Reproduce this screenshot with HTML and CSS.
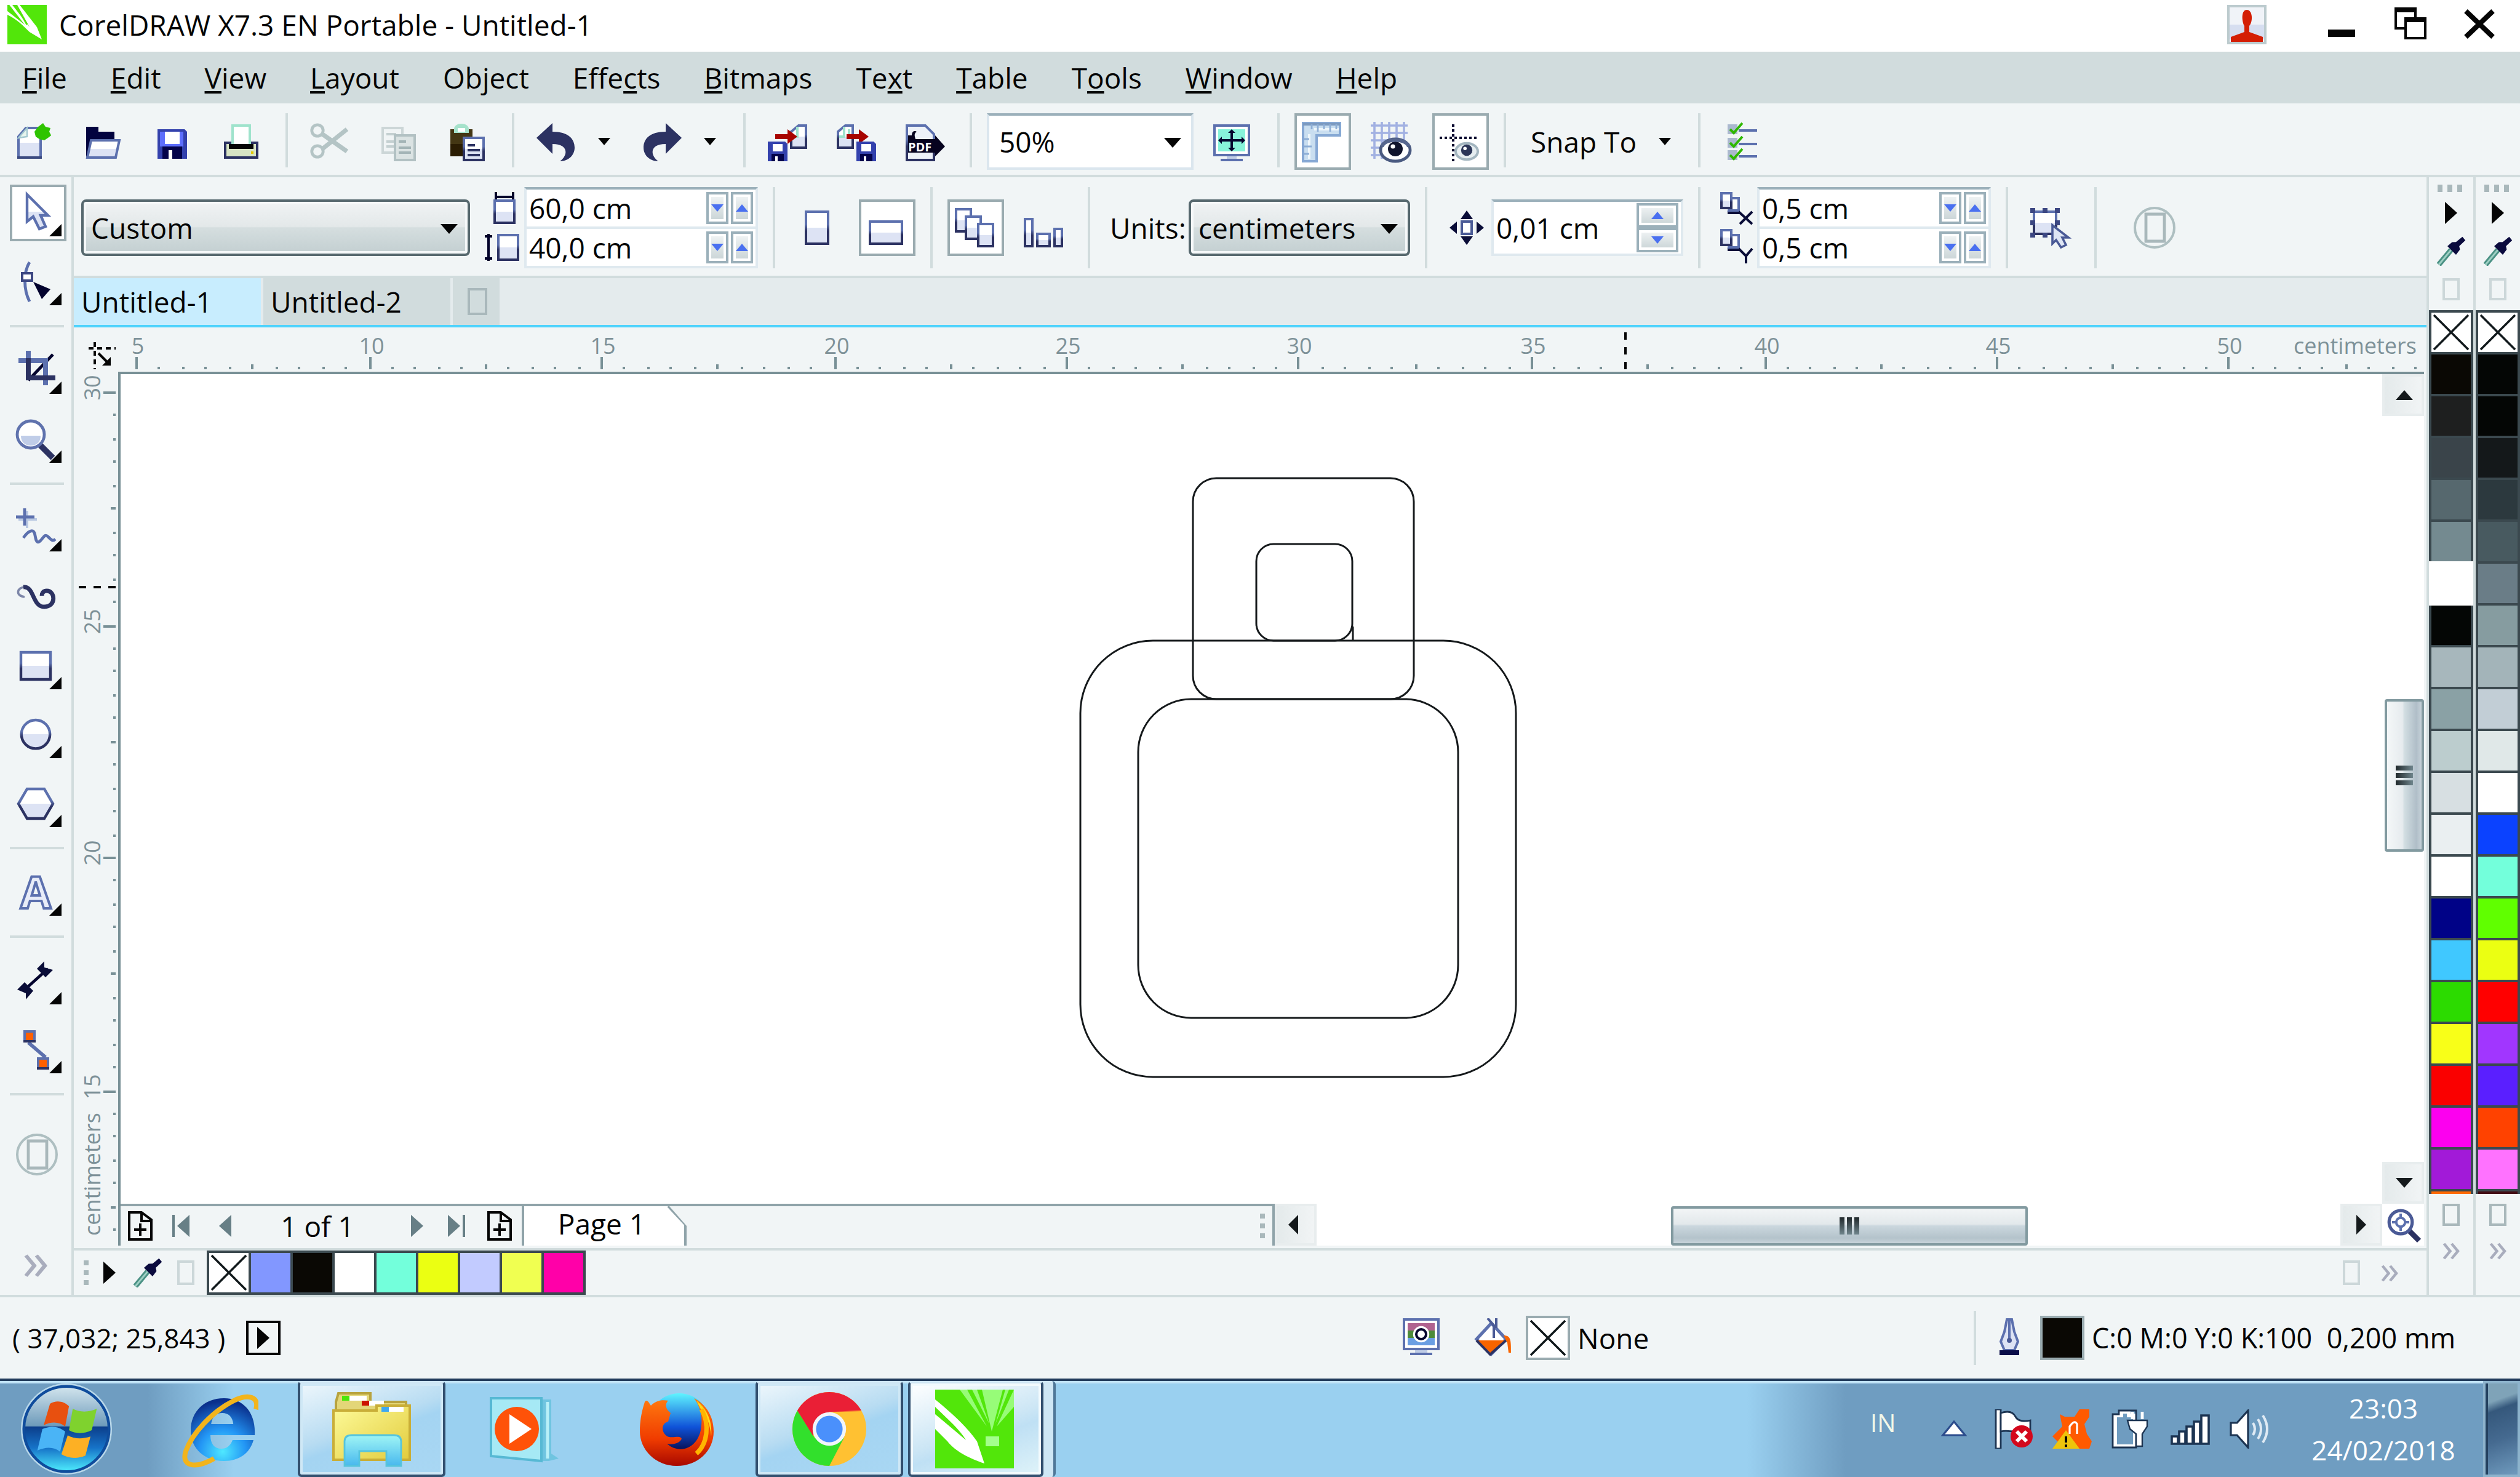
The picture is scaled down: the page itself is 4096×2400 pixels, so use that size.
FILE: index.html
```html
<!DOCTYPE html>
<html lang="en">
<head>
<meta charset="utf-8">
<title>CorelDRAW X7.3 EN Portable - Untitled-1</title>
<link rel="stylesheet" href="styles.css">
</head>
<body>
<svg class="defs" aria-hidden="true">
  <defs>
    <linearGradient id="edge" x1="0" y1="0" x2="0" y2="1"><stop offset=".4" stop-color="#5c70ae"/><stop offset=".6" stop-color="#2c3262"/></linearGradient>
    <linearGradient id="half" x1="0" y1="0" x2="0" y2="1"><stop offset=".5" stop-color="#fff"/><stop offset=".5" stop-color="#dde3f4"/></linearGradient>
    <linearGradient id="orb" x1="0" y1="0" x2="0" y2="1"><stop offset="0" stop-color="#d4e6ee"/><stop offset=".46" stop-color="#6e9bbb"/><stop offset=".48" stop-color="#0c3f8c"/><stop offset=".72" stop-color="#1673c8"/><stop offset="1" stop-color="#4ff0ff"/></linearGradient>
    <radialGradient id="ie" cx=".5" cy=".85" r=".8"><stop offset="0" stop-color="#4fe8ff"/><stop offset=".45" stop-color="#2396f5"/><stop offset="1" stop-color="#0a2f8c"/></radialGradient>
    <linearGradient id="folder" x1="0" y1="0" x2="1" y2="1"><stop offset="0" stop-color="#fdfb9a"/><stop offset="1" stop-color="#e2cb3c"/></linearGradient>
    <linearGradient id="glass" x1="0" y1="0" x2="0" y2="1"><stop offset="0" stop-color="#9ff5f5"/><stop offset="1" stop-color="#48b8ee"/></linearGradient>
    <linearGradient id="fox" x1="0" y1="0" x2="0" y2="1"><stop offset="0" stop-color="#ff7a10"/><stop offset=".6" stop-color="#f03c00"/><stop offset="1" stop-color="#a80800"/></linearGradient>
    <linearGradient id="globe" x1="0" y1="0" x2="0" y2="1"><stop offset="0" stop-color="#5ff4ff"/><stop offset=".55" stop-color="#0f52d8"/><stop offset="1" stop-color="#06033c"/></linearGradient>
    <symbol id="i-dropper" viewBox="0 0 12 12"><path d="M1 11.500 6 5.500" stroke="#4a9184" stroke-width="2.200"/><path d="M1 11.500 6 5.500" stroke="#9fd0c4" stroke-width=".7"/><path d="M4.500 4 8 7.500 9.600 5.400 9.300 4 11.800 1.600 10.600.2 8 2.300 6.400 2.400Z" fill="#0b0b3e"/></symbol>
    <symbol id="i-play" viewBox="0 0 5 9"><path d="M0 0 5 4.500 0 9Z" fill="#050505"/></symbol>
    <symbol id="i-none" viewBox="0 0 16 16"><path d="M1 1 15 15M15 1 1 15" stroke="#11191c" stroke-width=".9"/></symbol>
    <symbol id="i-oval" viewBox="0 0 18 18"><circle cx="9" cy="9" r="8" fill="none" stroke="#aebfc1"/><path d="M5.500 3.500v11h7.500v-11Z" fill="none" stroke="#a9b8bb" stroke-width="1.200"/></symbol>
    <symbol id="i-addpage" viewBox="0 0 10 12"><path d="M.5.500h5L9.500 3.500v8h-9ZM5.500 1v3h4M5 5v5M2.500 7.500h5" fill="none" stroke="#050505"/></symbol>
  </defs>
</svg>

<header class="titlebar">
  <svg class="app-icon" viewBox="0 0 16 16"><rect width="16" height="16" fill="#52e60a"/><path d="M0 4C4 6 6 8 9 11L14 14 12 9 5 0H4L9 9 2 0H.8L7 8 0 2.500Z" fill="#fff"/><path d="M4 1 8 8" stroke="#52e60a" stroke-width=".7"/></svg>
  <h1 class="title">CorelDRAW X7.3 EN Portable - Untitled-1</h1>
  <div class="window-controls">
    <button class="wc" aria-label="Account"><svg viewBox="0 0 16 16"><rect x=".5" y=".5" width="15" height="15" fill="#f0f3f8" stroke="#bccbce"/><rect x="1" y="8" width="14" height="6" fill="#d6def0"/><path d="M8 2C5.500 2 6 7 7 8.500V11L1.500 13V15h13V13L9 11V8.500C10.500 7 10.500 2 8 2Z" fill="#d41e04"/></svg></button>
    <button class="wc" aria-label="Minimize"><svg viewBox="0 0 16 16"><path d="M2 10h11v3H2Z" fill="#050505"/></svg></button>
    <button class="wc" aria-label="Restore"><svg viewBox="0 0 16 16"><path d="M1.500 2h8v7.500h-8Z" fill="#fff" stroke="#050505"/><path d="M1 1h9v2H1Z" fill="#050505"/><path d="M5.500 6h8v7.500h-8Z" fill="#fff" stroke="#050505"/><path d="M5 5h9v2H5Z" fill="#050505"/></svg></button>
    <button class="wc" aria-label="Close"><svg viewBox="0 0 16 16"><path d="M2 2.500 13 13M13 2.500 2 13" stroke="#050505" stroke-width="2"/></svg></button>
  </div>
</header>

<nav class="menubar" aria-label="Main menu">
  <a href="#"><u>F</u>ile</a><a href="#"><u>E</u>dit</a><a href="#"><u>V</u>iew</a><a href="#"><u>L</u>ayout</a><a href="#">Ob<u>j</u>ect</a><a href="#">Effe<u>c</u>ts</a><a href="#"><u>B</u>itmaps</a><a href="#">Te<u>x</u>t</a><a href="#"><u>T</u>able</a><a href="#">T<u>o</u>ols</a><a href="#"><u>W</u>indow</a><a href="#"><u>H</u>elp</a>
</nav>

<div class="toolbar" role="toolbar" aria-label="Standard">
  <button class="tool" aria-label="New"><svg viewBox="0 0 16 16"><path d="M1.500 14.500V6L4.500 2.500H10.500V14.500Z" fill="url(#half)" stroke="#5c70ae"/><path d="M1 14h10v1H1Z" fill="#3b4a80"/><path d="M1.500 6.500 5 6V2.500Z" fill="#e8f5ee" stroke="#a3c8d0" stroke-width=".6"/><path d="M11.500.5 12.500 2 14.500 2.500 14 4 14.800 5.500 13.500 6.500 12 7.500 10 7 8.500 6 8 4 9.500 2Z" fill="#2fc400"/></svg></button>
  <button class="tool" aria-label="Open"><svg viewBox="0 0 16 16"><path d="M1 14V2h5v2h6.500v4H4L2 15Z" fill="#02033f"/><path d="M3 7.500H14.500L13 14.500H1.500Z" fill="url(#half)" stroke="#5c70ae"/></svg></button>
  <button class="tool" aria-label="Save"><svg viewBox="0 0 16 16"><path d="M2 3h11l1 1v11H2Z" fill="#3341ad"/><path d="M3 4h2v5h6V4h1.500v6H3Z" fill="#5d6efc"/><path d="M5 4h6v5H5Z" fill="#fff"/><path d="M4 10h8v5H4Z" fill="#03034a"/><path d="M6.500 11.500h1.500V15H6.500Z" fill="#fff"/></svg></button>
  <button class="tool" aria-label="Print"><svg viewBox="0 0 16 16"><path d="M1.500 8.500H14.500V14.500H1.500Z" fill="#d8e4c4" stroke="#2c3262"/><path d="M4.500 1.500h7v8h-7Z" fill="#fff" stroke="#9fe3cc"/><path d="M3 9h10v2H3Z" fill="#050505"/><path d="M12 12h1v1h-1Z" fill="#e4c800"/></svg></button>
  <span class="sep"></span>
  <button class="tool" aria-label="Cut" disabled><svg viewBox="0 0 16 16" fill="none" stroke="#b4c4c5"><circle cx="3" cy="3.500" r="2.300" stroke-width="1.200"/><circle cx="3" cy="12" r="2.300" stroke-width="1.200"/><path d="M5 5 15 12M5 11 15 3" stroke-width="1.800"/></svg></button>
  <button class="tool" aria-label="Copy" disabled><svg viewBox="0 0 16 16"><path d="M1.500 2.500h8v10h-8Z" fill="#f0f4f5" stroke="#ccd6d7"/><path d="M3 5h4M3 8h3M3 10h3" stroke="#c4d0d1"/><path d="M6.500 5.500h8v10h-8Z" fill="#dbe3e3" stroke="#b2c1c3"/><path d="M8 8h3M8 10.500h5M8 12.500h5" stroke="#a3b4b6"/></svg></button>
  <button class="tool" aria-label="Paste"><svg viewBox="0 0 16 16"><path d="M1 3h9v11H1Z" fill="#443714"/><path d="M1 9h9v5H1Z" fill="#2b1d03"/><path d="M2.500 4.500V3C2.500 0 8.500 0 8.500 3V4.500Z" fill="#a6e2cb"/><path d="M4 2.500h3v1.500H4Z" fill="#fff"/><path d="M6.500 6.500h8v9h-8Z" fill="url(#half)" stroke="url(#edge)"/><path d="M8 9.500h3M8 11.500h5M8 13.500h5" stroke="#2c3262"/></svg></button>
  <span class="sep"></span>
  <div class="split"><button class="tool" aria-label="Undo"><svg viewBox="0 0 16 16"><path d="M6.500.5V4C13 4 15.500 7 15.500 10.500 15.500 13.500 13 16 9.500 16 13 13.500 13 9 6.500 9V13L0 6.500Z" fill="#2c3262"/></svg></button><button class="drop" aria-label="Undo list"></button></div>
  <div class="split"><button class="tool" aria-label="Redo"><svg viewBox="0 0 16 16"><path d="M9.500.5V4C3 4 .5 7 .5 10.500.5 13.500 3 16 6.500 16 3 13.500 3 9 9.500 9V13L16 6.500Z" fill="#2c3262"/></svg></button><button class="drop" aria-label="Redo list"></button></div>
  <span class="sep"></span>
  <button class="tool" aria-label="Import"><svg viewBox="0 0 16 16"><path d="M9.500 10.500V4L12.500 1.500h3v9Z" fill="url(#half)" stroke="url(#edge)"/><path d="M12 2v4H9.500" fill="none" stroke="#9fe3cc"/><path d="M3 5h5V3l4 3-4 3V7H3Z" fill="#a80400"/><path d="M0 8h7l1 1v7H0Z" fill="#3341ad"/><path d="M2 9h4v3H2Z" fill="#fff"/><path d="M1.500 13h5v3h-5Z" fill="#03034a"/><path d="M3 14h1v2H3Z" fill="#fff"/></svg></button>
  <button class="tool" aria-label="Export"><svg viewBox="0 0 16 16"><path d="M.5 10.500V4L3.500 1.500h3v9Z" fill="url(#half)" stroke="url(#edge)"/><path d="M3 2v4H1M5 3v4" fill="none" stroke="#9fe3cc"/><path d="M4 5h5V3l4 3-4 3V7H4Z" fill="#a80400"/><path d="M8 8h7l1 1v7H8Z" fill="#3341ad"/><path d="M10 9h4v3h-4Z" fill="#fff"/><path d="M9.500 13h5v3h-5Z" fill="#03034a"/><path d="M11 14h1v2h-1Z" fill="#fff"/></svg></button>
  <button class="tool" aria-label="Publish to PDF"><svg viewBox="0 0 16 16"><path d="M.5 1.500H8L11.500 5V15.500H.5Z" fill="#edf1f8" stroke="url(#edge)"/><path d="M1 7V5.500h1.500C2.500 3.500 4 3.500 4.500 4 3 5 4 6.500 4 7h8V5.500L16 10 12 14V12.500H1Z" fill="#06031f"/><text class="pdf" x="1" y="12">PDF</text></svg></button>
  <span class="sep"></span>
  <div class="zoom-level"><select aria-label="Zoom level"><option>50%</option></select></div>
  <button class="tool" aria-label="Full-screen preview"><svg viewBox="0 0 16 16"><path d="M.5 1.500h14v12H.5Z" fill="#fff" stroke="#5c70ae"/><path d="M2 3h11v9H2Z" fill="#87f3da"/><path d="M7.500 3.500v8M2.500 7.500h10" stroke="#04042e"/><path d="M6 4.500h3L7.500 3ZM6 10.500h3L7.500 12ZM3.500 6v3L2 7.500ZM11.500 6v3L13 7.500Z" fill="#04042e"/><path d="M5.500 14h4v1h-4Z" fill="#c0cde6"/><path d="M3 15h9v1H3Z" fill="#5c70ae"/></svg></button>
  <span class="sep"></span>
  <button class="tool on" aria-label="Show rulers"><svg viewBox="0 0 16 16"><path d="M.5.500h15v5H6v10.500H.5Z" fill="#c9def0" stroke="#86a8d4"/><path d="M.5.500h15v1H.5Z" fill="#7c9ac0"/><path d="M5 3h10M3 5v10" stroke="#eef6fb"/><path d="M4 1v2M6.500 1v3M9 1v2M11.500 1v3M14 1v2M1 7h2M1 10h3M1 13h2" stroke="#8eaed6" stroke-width=".7"/></svg></button>
  <button class="tool" aria-label="Show grid"><svg viewBox="0 0 16 16"><path d="M1.500 0v15M4.500 0v15M7.500 0v8M10.500 0v8M13.500 0v8M0 1.500h15M0 4.500h15M0 7.500h7M0 10.500h5M0 13.500h4" stroke="#a2b1e2" stroke-width=".9"/><ellipse cx="10" cy="11.500" rx="6" ry="4.500" fill="#fff" stroke="#4a5a80" stroke-width="1.200"/><circle cx="10" cy="11" r="3" fill="#10142c"/><circle cx="9" cy="10" r=".9" fill="#fff"/><path d="M4.500 10C6 6.500 14 6.500 15.500 10" fill="none" stroke="#56668e" stroke-width="1.500"/></svg></button>
  <button class="tool on" aria-label="Show guidelines"><svg viewBox="0 0 16 16"><path d="M5.500 1v16M0 6.500h16" stroke="#04042e" stroke-dasharray="1 1"/><ellipse cx="11" cy="12" rx="4.500" ry="3.300" fill="#e6edf0" stroke="#a4b6c0"/><circle cx="11" cy="11.500" r="2.300" fill="#2c3658"/><circle cx="10.300" cy="10.800" r=".7" fill="#fff"/></svg></button>
  <span class="sep"></span>
  <button class="snap">Snap To</button>
  <span class="sep"></span>
  <button class="tool" aria-label="Options"><svg viewBox="0 0 16 16"><path d="M2 1h4v4H2ZM2 6.500h4v4H2ZM2 11.500h4v4H2Z" fill="#aab8ce"/><path d="M6.500 3.500H14M6.500 9H14M6.500 14H14" stroke="#5c70ae"/><path d="M3 3 4.500 4.500 8 .5M3 8.500 4.500 10 8 6M3 13.500 4.500 15 8 11" fill="none" stroke="#2fb800"/></svg></button>
</div>

<main class="workspace">
  <aside class="toolbox" aria-label="Toolbox">
    <button class="tool fly on" aria-label="Pick"><svg viewBox="0 0 16 16"><path d="M4.500.500V11.500L7 9.500 9.500 14.500 12 13.500 10 9H13Z" fill="url(#half)" stroke="#5c70ae" stroke-width="1.100"/></svg></button>
    <button class="tool fly" aria-label="Shape"><svg viewBox="0 0 16 16"><path d="M5.500 0C3 4 3 11 5.500 16" fill="none" stroke="#5c70ae" stroke-width="1.200"/><path d="M2.500 4.500h4v3h-4Z" fill="#fff" stroke="#3c4782"/><path d="M7 8 14 11 10.500 15Z" fill="#03032e"/></svg></button>
    <span class="rule"></span>
    <button class="tool fly" aria-label="Crop"><svg viewBox="0 0 16 16"><path d="M5 12 15 1.500" stroke="#04042e" stroke-width="1.200"/><path d="M1 4h11v10" fill="none" stroke="#5c70ae" stroke-width="2"/><path d="M5 1v10h11" fill="none" stroke="#2c3262" stroke-width="2"/><path d="M4 0h2v3H4Z" fill="#5c70ae"/></svg></button>
    <button class="tool fly" aria-label="Zoom"><svg viewBox="0 0 16 16"><path d="M9.500 10 15 15.500" stroke="#2c3262" stroke-width="2.400"/><circle cx="6" cy="6" r="5.500" fill="#fff" stroke="#5f72ad" stroke-width="1.200"/><path d="M2 6.500h8C10 9 8.500 10.500 6 10.500S2 9 2 6.500Z" fill="#c0cde8"/></svg></button>
    <span class="rule"></span>
    <button class="tool fly" aria-label="Freehand"><svg viewBox="0 0 16 16"><path d="M4.500 1v7M1 4.500h7.500" stroke="#b9c8e2"/><path d="M3.500 0v7M0 3.500h7.500" stroke="#5c70ae" stroke-width="1.200"/><path d="M3 12C5 9 7 8.500 7.500 10S8 14.500 9.500 13.500 11.500 10 13 11.500 15 13.500 16 12.500" fill="none" stroke="#5c70ae" stroke-width="1.200"/></svg></button>
    <button class="tool" aria-label="Artistic media"><svg viewBox="0 0 16 16"><path d="M3.500 8C-.5 7.500.5 4 3.500 4" fill="none" stroke="#7d86a8" stroke-width=".9"/><path d="M3 4C7.500 3.500 6.500 12 11.500 12 16.500 12 16 5.500 12.500 5.500 11 5.500 10.500 6.500 10.500 7.500" fill="none" stroke="#2c3262" stroke-width="1.700"/></svg></button>
    <button class="tool fly" aria-label="Rectangle"><svg viewBox="0 0 16 16"><path d="M2 2.500h12v11H2Z" fill="url(#half)" stroke="url(#edge)" stroke-width="1.100"/></svg></button>
    <button class="tool fly" aria-label="Ellipse"><svg viewBox="0 0 16 16"><circle cx="8" cy="7.800" r="5.800" fill="url(#half)" stroke="url(#edge)" stroke-width="1.100"/></svg></button>
    <button class="tool fly" aria-label="Polygon"><svg viewBox="0 0 16 16"><path d="M4.500 2h7L15 8 11.500 14h-7L1 8Z" fill="url(#half)" stroke="url(#edge)" stroke-width="1.100"/></svg></button>
    <span class="rule"></span>
    <button class="tool fly" aria-label="Text"><svg viewBox="0 0 16 16"><text class="a-icon" x="8" y="14.500">A</text></svg></button>
    <span class="rule"></span>
    <button class="tool fly" aria-label="Dimension"><svg viewBox="0 0 16 16"><path d="M3 12 13 3" stroke="#03032e" stroke-width="1.200"/><path d="M.5 11.500 3.500 8.500 7 12 4 15.500V13ZM15 3.500 12 6.500 8.500 3 11.500 0V2.500Z" fill="#0a0d38"/></svg></button>
    <button class="tool fly" aria-label="Connector"><svg viewBox="0 0 16 16"><path d="M5 5 12 11" stroke="#5c70ae" stroke-width="1.400"/><path d="M3 0h5v5H3ZM8.500 11h5v5h-5Z" fill="#5c70ae"/><path d="M4 1h3v3H4ZM9.500 12h3v3h-3Z" fill="#ff5f00"/><path d="M3 4h5v1H3ZM8.500 15h5v1h-5Z" fill="#2c3262"/></svg></button>
    <span class="rule"></span>
    <button class="oval" aria-label="Quick customize"><svg viewBox="0 0 18 18"><use href="#i-oval"/></svg></button>
    <button class="more" aria-label="More tools">»</button>
  </aside>

  <section class="center">
    <div class="propbar" role="toolbar" aria-label="Property bar">
      <div class="pick page-size"><select aria-label="Page size"><option>Custom</option></select></div>
      <div class="pair dims">
        <label for="pw"><svg viewBox="0 0 16 16"><path d="M4.500 0v4M11.500 0v4M4 2h8" stroke="#02022a"/><path d="M4 3.500h8v9H4Z" fill="url(#half)" stroke="url(#edge)"/></svg></label>
        <div class="field"><input id="pw" value="60,0 cm"><button class="spin down" aria-label="Decrease width"></button><button class="spin up" aria-label="Increase width"></button></div>
        <label for="ph"><svg viewBox="0 0 16 16"><path d="M1.500 1v11M0 2h3M0 11h3" stroke="#02022a"/><path d="M5.500 1.500h8v10h-8Z" fill="url(#half)" stroke="url(#edge)"/></svg></label>
        <div class="field"><input id="ph" value="40,0 cm"><button class="spin down" aria-label="Decrease height"></button><button class="spin up" aria-label="Increase height"></button></div>
      </div>
      <span class="sep"></span>
      <button class="tool" aria-label="Portrait"><svg viewBox="0 0 16 16"><path d="M3.500 1.500h9v13h-9Z" fill="url(#half)" stroke="url(#edge)"/></svg></button>
      <button class="tool on" aria-label="Landscape"><svg viewBox="0 0 16 16"><path d="M1.500 5.500h13v9h-13Z" fill="url(#half)" stroke="url(#edge)"/></svg></button>
      <span class="sep"></span>
      <button class="tool on" aria-label="All pages"><svg viewBox="0 0 16 16" fill="url(#half)" stroke="url(#edge)"><path d="M.5.500h6v9h-6Z"/><path d="M4.500 3.500h6v9h-6Z"/><path d="M9.500 6.500h6v9h-6Z"/></svg></button>
      <button class="tool" aria-label="Current page"><svg viewBox="0 0 16 16" fill="url(#half)" stroke="url(#edge)"><path d="M.5 4.500h3v11h-3Z"/><path d="M5.500 10.500h5v5h-5Z"/><path d="M12.500 8.500h3v7h-3Z"/></svg></button>
      <span class="sep"></span>
      <div class="units"><label for="units">Units:</label><div class="pick"><select id="units"><option>centimeters</option></select></div></div>
      <span class="sep"></span>
      <div class="nudge">
        <label for="nudge"><svg viewBox="0 0 16 16"><path d="M8 1 10.500 4.500h-5ZM8 15l2.500-3.500h-5ZM1 8l3-2.500v5ZM15 8l-3-2.500v5Z" fill="#0a0d38"/><path d="M6 5.500h4v5H6Z" fill="#fff" stroke="#4a5a96"/></svg></label>
        <div class="field"><input id="nudge" value="0,01 cm"><div class="stack"><button class="spin up" aria-label="Increase nudge"></button><button class="spin down" aria-label="Decrease nudge"></button></div></div>
      </div>
      <span class="sep"></span>
      <div class="pair">
        <label for="dx"><svg viewBox="0 0 16 16"><path d="M6.500 4.500h3v5h-4Z" fill="#fff" stroke="#5c70ae"/><path d="M2.500 2.500h4v6h-4Z" fill="url(#half)" stroke="url(#edge)"/><path d="M5 10.500h5M9.500 10 15 15M15 10 10 15" stroke="#0a0d38" fill="none"/></svg></label>
        <div class="field"><input id="dx" value="0,5 cm"><button class="spin down" aria-label="Decrease x"></button><button class="spin up" aria-label="Increase x"></button></div>
        <label for="dy"><svg viewBox="0 0 16 16"><path d="M6.500 3.500h3v5h-4Z" fill="#fff" stroke="#5c70ae"/><path d="M2.500 1.500h4v6h-4Z" fill="url(#half)" stroke="url(#edge)"/><path d="M5 9.500h5M9.500 9 12.500 12 15 9M12.500 12v3" stroke="#0a0d38" fill="none"/></svg></label>
        <div class="field"><input id="dy" value="0,5 cm"><button class="spin down" aria-label="Decrease y"></button><button class="spin up" aria-label="Increase y"></button></div>
      </div>
      <span class="sep"></span>
      <button class="tool" aria-label="Treat as filled"><svg viewBox="0 0 16 16"><path d="M1.500 1.500h9v9h-9Z" fill="url(#half)" stroke="url(#edge)"/><path d="M0 0h2v2H0ZM5 0h2v2H5ZM10 0h2v2h-2ZM0 5h2v2H0ZM10 5h2v2h-2ZM0 10h2v2H0ZM5 10h2v2H5Z" fill="#3c4782"/><path d="M9 7v7.500l1.500-1.500L12.500 16l2-1-1.500-3h2.500Z" fill="#dfe6f4" stroke="#4a5a96" stroke-width=".9"/></svg></button>
      <span class="sep"></span>
      <button class="oval" aria-label="Quick customize"><svg viewBox="0 0 18 18"><use href="#i-oval"/></svg></button>
    </div>

    <div class="tabs">
      <button class="tab active">Untitled-1</button><button class="tab">Untitled-2</button><button class="tab add" aria-label="New document"><span class="box"></span></button>
    </div>

    <div class="editor">
      <div class="corner"><svg viewBox="0 0 12 12"><path d="M2.500 0v11M0 2.500h11" stroke="#050505" stroke-dasharray="2 1.500"/><path d="M4 4.500 8.500 9" stroke="#050505"/><path d="M5.500 9.500H9V6Z" fill="#050505"/></svg></div>
      <svg class="ruler-h" id="ruler-h"></svg>
      <svg class="ruler-v" id="ruler-v"></svg>
      <div class="canvas">
        <svg class="page" fill="none" stroke="#15191b" stroke-width="3">
          <rect x="1560" y="433" width="708" height="709" rx="118"/>
          <rect x="1654" y="528" width="520" height="518" rx="86"/>
          <rect x="1743" y="169" width="359" height="359" rx="38"/>
          <rect x="1846" y="276" width="156" height="157" rx="28"/>
          <path d="M2003 410v22"/>
        </svg>
        <div class="vscroll">
          <button class="arrow up" aria-label="Scroll up"></button>
          <button class="thumb" aria-label="Vertical scroll"><i></i><i></i><i></i></button>
          <button class="arrow down" aria-label="Scroll down"></button>
        </div>
      </div>
      <div class="pager">
        <div class="pager-nav">
          <button class="p-add" aria-label="Add page before"><svg viewBox="0 0 10 12"><use href="#i-addpage"/></svg></button>
          <button class="p-first" aria-label="First page"><svg viewBox="0 0 7 9"><path d="M0 0h1v9H0ZM7 0v9L2 4.500Z" fill="#677f86"/></svg></button>
          <button class="p-prev" aria-label="Previous page"><svg viewBox="0 0 5 9"><path d="M5 0v9L0 4.500Z" fill="#677f86"/></svg></button>
          <span class="p-count">1 of 1</span>
          <button class="p-next" aria-label="Next page"><svg viewBox="0 0 5 9"><path d="M0 0v9l5-4.500Z" fill="#677f86"/></svg></button>
          <button class="p-last" aria-label="Last page"><svg viewBox="0 0 7 9"><path d="M6 0h1v9H6ZM0 0v9l5-4.500Z" fill="#677f86"/></svg></button>
          <button class="p-add" aria-label="Add page after"><svg viewBox="0 0 10 12"><use href="#i-addpage"/></svg></button>
          <button class="page-tab"><svg viewBox="0 0 67 17"><path d="M.5 0V17M59.500 0 66.500 7.500V17" fill="none" stroke="#8fa3a9"/></svg><span>Page 1</span></button>
          <span class="grip tall end"></span>
        </div>
        <div class="hscroll">
          <button class="arrow left" aria-label="Scroll left"></button>
          <button class="thumb" aria-label="Horizontal scroll"><i></i><i></i><i></i></button>
          <button class="arrow right" aria-label="Scroll right"></button>
          <button class="nav-zoom" aria-label="Navigator"><svg viewBox="0 0 14 14"><path d="M8.500 8.500 13 13" stroke="#2c3262" stroke-width="2.200"/><circle cx="5.500" cy="5.500" r="4.700" fill="#fff" stroke="#4a5a96" stroke-width="1.300"/><path d="M5.500 2v7M2 5.500h7" stroke="#5c70ae"/><circle cx="5.500" cy="5.500" r="1.800" fill="#fff" stroke="#5c70ae"/></svg></button>
        </div>
      </div>
    </div>

    <div class="docpal">
      <span class="grip tall"></span>
      <button class="d-play" aria-label="Palette menu"><svg viewBox="0 0 5 9"><use href="#i-play"/></svg></button>
      <button class="d-drop" aria-label="Eyedropper"><svg viewBox="0 0 12 12"><use href="#i-dropper"/></svg></button>
      <span class="box faint"></span>
      <div class="swatches row">
        <button class="sw" aria-label="No color"><svg viewBox="0 0 16 16"><use href="#i-none"/></svg></button>
        <button class="sw" style="background:#8297ff" aria-label="Periwinkle"></button>
        <button class="sw" style="background:#0a0804" aria-label="Black"></button>
        <button class="sw" style="background:#ffffff" aria-label="White"></button>
        <button class="sw" style="background:#73ffdb" aria-label="Aqua"></button>
        <button class="sw" style="background:#ebff12" aria-label="Yellow"></button>
        <button class="sw" style="background:#c2cbff" aria-label="Lavender"></button>
        <button class="sw" style="background:#f0ff51" aria-label="Light yellow"></button>
        <button class="sw" style="background:#ff00a8" aria-label="Magenta"></button>
      </div>
      <span class="box faint end"></span>
      <button class="more d-more" aria-label="More colors">»</button>
    </div>
  </section>

  <aside class="palette" aria-label="Color palette">
    <span class="grip"></span>
    <button class="c-play" aria-label="Palette menu"><svg viewBox="0 0 5 9"><use href="#i-play"/></svg></button>
    <button class="c-drop" aria-label="Eyedropper"><svg viewBox="0 0 12 12"><use href="#i-dropper"/></svg></button>
    <span class="box faint"></span>
    <div class="swatches">
      <button class="sw" aria-label="No color"><svg viewBox="0 0 16 16"><use href="#i-none"/></svg></button>
      <button class="sw" style="background:#0a0804"></button><button class="sw" style="background:#1e1f1f"></button><button class="sw" style="background:#3a444a"></button><button class="sw" style="background:#56686e"></button><button class="sw" style="background:#748a90"></button><button class="sw selected" style="background:#ffffff"></button><button class="sw" style="background:#040605"></button><button class="sw" style="background:#a7b7bc"></button><button class="sw" style="background:#8aa1a5"></button><button class="sw" style="background:#bccdce"></button><button class="sw" style="background:#d7dfe2"></button><button class="sw" style="background:#eaeff1"></button><button class="sw" style="background:#ffffff"></button><button class="sw" style="background:#000287"></button><button class="sw" style="background:#40c8ff"></button><button class="sw" style="background:#2cdb00"></button><button class="sw" style="background:#f8ff18"></button><button class="sw" style="background:#fa0000"></button><button class="sw" style="background:#fc00ef"></button><button class="sw" style="background:#a21ad8"></button><button class="sw cut" style="background:#ff6a00"></button>
    </div>
    <span class="box"></span>
    <button class="more" aria-label="More colors">»</button>
  </aside>
  <aside class="palette" aria-label="Second color palette">
    <span class="grip"></span>
    <button class="c-play" aria-label="Palette menu"><svg viewBox="0 0 5 9"><use href="#i-play"/></svg></button>
    <button class="c-drop" aria-label="Eyedropper"><svg viewBox="0 0 12 12"><use href="#i-dropper"/></svg></button>
    <span class="box faint"></span>
    <div class="swatches">
      <button class="sw" aria-label="No color"><svg viewBox="0 0 16 16"><use href="#i-none"/></svg></button>
      <button class="sw" style="background:#040605"></button><button class="sw" style="background:#040605"></button><button class="sw" style="background:#14181a"></button><button class="sw" style="background:#2c393e"></button><button class="sw" style="background:#485a60"></button><button class="sw" style="background:#6a7d87"></button><button class="sw" style="background:#869ca0"></button><button class="sw" style="background:#a3b4b9"></button><button class="sw" style="background:#c2ced6"></button><button class="sw" style="background:#e0e8e8"></button><button class="sw" style="background:#ffffff"></button><button class="sw" style="background:#0b42ff"></button><button class="sw" style="background:#73ffdb"></button><button class="sw" style="background:#60ff00"></button><button class="sw" style="background:#ebff12"></button><button class="sw" style="background:#ff0000"></button><button class="sw" style="background:#a136ff"></button><button class="sw" style="background:#5a1fff"></button><button class="sw" style="background:#ff4200"></button><button class="sw" style="background:#ff72ff"></button><button class="sw cut" style="background:#430c14"></button>
    </div>
    <span class="box"></span>
    <button class="more" aria-label="More colors">»</button>
  </aside>
</main>

<div class="status">
  <span class="coords">( 37,032; 25,843 )</span>
  <button class="st-play" aria-label="Status options"><svg viewBox="0 0 5 9"><use href="#i-play"/></svg></button>
  <div class="st-fill">
    <svg class="ic" viewBox="0 0 16 16"><path d="M.5.500h14v12H.5Z" fill="#fff" stroke="#5c70ae"/><path d="M2 2h11v3H2Z" fill="#b0628f"/><path d="M2 5h11v3H2Z" fill="#4d8b3a"/><path d="M2 8h11v3H2Z" fill="#6a9ee2"/><circle cx="7.500" cy="6.500" r="3.300" fill="#fff"/><circle cx="7.500" cy="6.500" r="2" fill="#fff" stroke="#04042e"/><path d="M5 13h5v1H5Z" fill="#c0cde6"/><path d="M3 14h9v1H3Z" fill="#5c70ae"/></svg>
    <svg class="ic" viewBox="0 0 16 16"><path d="M1 8.500 7 2 13 8.500 7 14.500Z" fill="#fff" stroke="#5c70ae" stroke-width="1.300"/><path d="M1.500 9H12.500L7 14.500Z" fill="#f86400"/><path d="M1 9 6.500 14.700 13 9" fill="none" stroke="#2c3262"/><path d="M5.500 0 8 3v5M9 0v4" fill="none" stroke="#4a5a96"/><path d="M12 7C15 7 15 9 15 14H14L13.500 10Z" fill="#f86400"/></svg>
    <span class="chip none"><svg viewBox="0 0 16 16"><use href="#i-none"/></svg></span>
    <span>None</span>
  </div>
  <div class="st-outline">
    <svg class="ic" viewBox="0 0 16 16"><path d="M6.500.500h2l1 5 1.500 4L9.500 13h-4L4 9.500 5.500 5.500Z" fill="#dde3f4" stroke="#5c70ae"/><path d="M7.500 0V9" stroke="#5c70ae"/><circle cx="7.500" cy="9" r="1" fill="#4a5a96"/><path d="M3.500 13h8v2h-8Z" fill="#0a0d48"/></svg>
    <span class="chip black"></span>
    <span class="cmyk">C:0 M:0 Y:0 K:100&nbsp; 0,200 mm</span>
  </div>
</div>

<footer class="taskbar">
  <button class="start" aria-label="Start"><svg viewBox="0 0 36 36"><circle cx="18" cy="18" r="17" fill="url(#orb)" stroke="#0f4c9c" stroke-width="1.400"/><circle cx="18" cy="18" r="17.700" fill="none" stroke="#b9d8ea" stroke-width=".6"/><path d="M11.500 8C14 6.500 17 7 19 9L17.500 17C15 15 12 15 9 16.500Z" fill="#e8500f"/><path d="M20.500 10C23 11.500 27 11.500 30 10L28 18.500C25 20 21.500 20 19 18.500Z" fill="#7fd22e"/><path d="M8.500 18C12 16.500 15 17 17.500 19L15.500 27C13 25 10 25 6.500 26.500Z" fill="#4ab4f6"/><path d="M18.500 20.500C21 22 24.500 22 27.500 21L25.500 28.500C22 30 18.500 29.500 16 28Z" fill="#fdb024"/></svg></button>
  <button class="task" aria-label="Internet Explorer"><svg viewBox="0 0 32 32"><path d="M18 3.500C10 3.500 4.500 9 4.500 16.500S10 29 18 29C24 29 28.500 26 30 20.500H21.500C20.500 23 19 24 17 24 14 24 12.500 22 12.500 18.500H30.500C31 9.500 26 3.500 18 3.500ZM12.800 14C13.200 11 14.800 9.500 17.300 9.500S21.500 11 21.800 14Z" fill="url(#ie)"/><path d="M31 8C32.500 3 28 1.500 22 4.500 13 9 5 18 2.500 25 .5 31 6 32.500 14 28" fill="none" stroke="#f2b41c" stroke-width="2"/></svg></button>
  <button class="task open" aria-label="Windows Explorer"><svg viewBox="0 0 32 32"><path d="M2.500 1.500h13V5H30V27.500H1.500V5Z" fill="#e3d678" stroke="#b8a33e"/><path d="M5 2.500h9v2H5Z" fill="#fff"/><path d="M4 2.500h3v2H4Z" fill="#4be60a"/><path d="M12 4.500h9v2h-9Z" fill="#fff"/><path d="M12 4.500h3v2h-3Z" fill="#cc1400"/><path d="M.500 8.500H18V6.500H31.500V28.500H.500Z" fill="url(#folder)" stroke="#c9ae38"/><path d="M20 7h9v2h-9Z" fill="#fff"/><path d="M20 7h3v2h-3Z" fill="#3fa8f0"/><path d="M5 31V21Q5 18.500 8 18.500H25Q28 18.500 28 21V31H22V25H11V31Z" fill="url(#glass)" stroke="#56c4dc" stroke-width=".7"/></svg></button>
  <button class="task" aria-label="Media Player"><svg viewBox="0 0 32 32"><path d="M6 4H27V26L30 28 26 29H24L6 27Z" fill="#6fc4e0"/><path d="M2.500 3.500H23V29L2.500 27Z" fill="#a6e9f5" stroke="#57b9d4"/><path d="M25.500 5V28" stroke="#b9f0f8" stroke-width="1.200"/><circle cx="13" cy="16" r="9" fill="#ff5208"/><path d="M10 10V22L19 16Z" fill="#fff"/></svg></button>
  <button class="task" aria-label="Firefox"><svg viewBox="0 0 32 32"><circle cx="17" cy="14" r="12.500" fill="url(#globe)"/><path d="M3 5C4 3.500 5 6 5.500 6.500 7.500 4.500 10 4 12.500 4.500 11 6 11.500 8 13.500 9.500L12.500 13C10 13.500 9.500 16.500 11.500 18.500S17.500 18 18 20C17 22 14 22.500 12 22 18 27 25.500 23 26 14.500 26.500 10 25 6 23 3.500 28 6 31 11 31 17 31 25 24.500 31 16 31S1 24.500 1 17C1 12 2 8 3 5Z" fill="url(#fox)"/><path d="M24 4.500C28.500 8 30.500 13 30 19 29.500 14 28 10 25.500 7.500Z" fill="#ffd818"/><path d="M26 8C29.500 14 28.500 22 24 26" fill="none" stroke="#ffb400" stroke-width="1.800"/></svg></button>
  <button class="task open" aria-label="Chrome"><svg viewBox="0 0 32 32"><circle cx="16" cy="16" r="15" fill="#ffc132"/><path d="M16 16 3 8.500A15 15 0 0 1 29 8.500L16 9Z" fill="#ea1f36"/><path d="M3 8.500A15 15 0 0 0 16 31L22 19.500 16 22 10 19.500Z" fill="#32e02c"/><path d="M3 8.500 9.500 19V14L16 9H29" fill="#ea1f36"/><circle cx="16" cy="16" r="6.800" fill="#f1f5fa"/><circle cx="16" cy="16" r="5.400" fill="#4a90fc"/></svg></button>
  <div class="task-stack"><button class="task open active" aria-label="CorelDRAW"><svg viewBox="0 0 32 32"><path d="M0 0H32V32H0Z" fill="#52e60a"/><path d="M0 4C6 9 12 14 17 21L20 30C14 28 8 25 5 21L0 16Z" fill="#fff"/><path d="M0 7C4 11 10 16 12.500 20.500L0 10Z" fill="#52e60a"/><path d="M10 0 21 15 13 0ZM15 0 22 14 17 0ZM19 0 23 17 27.500 0ZM32 0 25 15 32 7ZM30 0 24.500 14 28.500 0Z" fill="#a3ff8c" opacity=".85"/><path d="M20.500 19h5.500v4h-5.500Z" fill="#a3ff8c"/></svg></button></div>
  <div class="tray">
    <span class="lang">IN</span>
    <button class="tr" aria-label="Show hidden icons"><svg viewBox="0 0 16 16"><path d="M8 5 12.500 10.500h-9Z" fill="#fff" stroke="#2c4c8c" stroke-width=".8"/></svg></button>
    <button class="tr" aria-label="Action center"><svg viewBox="0 0 16 16"><path d="M1 0h2v16H1Z" fill="#fff" stroke="#1c3452" stroke-width=".7"/><path d="M3 1.500C6 .5 8 1 9 3S13 5 15 4.500V9H9C7 9 5 8.500 3 9Z" fill="#fff" stroke="#1c3452" stroke-width=".7"/><circle cx="11.500" cy="11" r="4.500" fill="#d4081c"/><path d="M9.500 9 13.500 13M13.500 9 9.500 13" stroke="#fff" stroke-width="1.500"/></svg></button>
    <button class="tr" aria-label="Antivirus"><svg viewBox="0 0 16 16"><path d="M3 2 5 3H9L11 0H15V3L13 6 14 10 16 13 15 16H5L0 11 4 7Z" fill="#ff5a00"/><path d="M7 10V7Q9 4 10 6V10" fill="none" stroke="#fff" stroke-width=".8"/><path d="M5.500 8.500 11 16H0Z" fill="#eec40c"/><path d="M5.500 11v2.500M5.500 14.300v1" stroke="#050505"/></svg></button>
    <button class="tr" aria-label="Power"><svg viewBox="0 0 16 16"><path d="M1.500 2.500H4V1H7V2.500H9.500V15H1.500Z" fill="#6f9cc0" stroke="#fff" stroke-width="1.500"/><path d="M.5 2H3V.5H10V15.500H.5Z" fill="none" stroke="#1c3452" stroke-width=".7"/><path d="M8.500 1v3M12.500 1v3" stroke="#fff" stroke-width="1.200"/><path d="M6.500 4.500h8V7L12.500 10V15H10V10L7.500 8Z" fill="#fff" stroke="#1c3452" stroke-width=".6"/></svg></button>
    <button class="tr" aria-label="Network"><svg viewBox="0 0 16 16"><path d="M.5 11h2.500v3H.5ZM3.500 9h2.500v5H3.500ZM6.500 7H9v7H6.500ZM9.500 5H12v9H9.500ZM12.500 2.500H15.500V14H12.500Z" fill="#fff" stroke="#1c3452" stroke-width=".9"/></svg></button>
    <button class="tr" aria-label="Volume"><svg viewBox="0 0 16 16"><path d="M.5 5.500H3L7.500.500V15.500L3 10.500H.5Z" fill="#fff" stroke="#1c3452" stroke-width=".8"/><path d="M9.500 5.500Q11 8 9.500 10.500M11.500 4Q14 8 11.500 12M13.500 2.500Q17 8 13.500 13.500" fill="none" stroke="#dfeaf4" stroke-width="1"/></svg></button>
    <div class="clock"><span>23:03</span><span>24/02/2018</span></div>
    <button class="desktop" aria-label="Show desktop"></button>
  </div>
</footer>
<script src="rulers.js"></script>
</body>
</html>
```
FILE: styles.css
```css
* { box-sizing: border-box; }
body {
  margin: 0;
  height: 100vh;
  display: flex;
  flex-direction: column;
  overflow: hidden;
  background: #f1f5f6;
  color: #050505;
  font: 46px/60px "Open Sans", "Noto Sans", sans-serif;
}
button, select, input { font: inherit; color: inherit; border: 0; padding: 0; margin: 0; background: none; border-radius: 0; }
button { display: flex; align-items: center; justify-content: center; flex: none; }
svg { display: block; flex: none; }
.defs { position: absolute; width: 0; height: 0; }
.end { margin-left: auto; }

.titlebar { height: 84px; flex: none; display: flex; align-items: center; padding: 0 32px 4px 12px; background: #fff; }
.app-icon { width: 64px; height: 64px; }
.title { margin: 0 0 0 20px; font-size: 46px; font-weight: 400; }
.window-controls { margin-left: auto; display: flex; gap: 48px; }
.window-controls .wc:first-child { margin-right: 44px; }
.wc svg { width: 64px; height: 64px; }

.menubar { height: 84px; flex: none; display: flex; align-items: center; gap: 71px; padding: 0 36px; background: #d1dcdd; }
.menubar a { color: inherit; text-decoration: none; }
.menubar u { text-decoration-thickness: 4px; text-underline-offset: 4px; }

.toolbar { height: 120px; flex: none; display: flex; align-items: flex-start; gap: 20px; padding: 16px 12px 0; border-bottom: 4px solid #d1dcdd; }
.tool { width: 92px; height: 92px; padding-right: 4px; border: 4px solid transparent; position: relative; }
.tool svg { width: 64px; height: 64px; overflow: visible; }
.tool.on { background: #fff; border-color: #9aabb0; }
.sep { width: 4px; height: 88px; margin: 0 4px; flex: none; background: #d1dcdd; }
.split { display: flex; }
.drop { width: 60px; height: 92px; }
.drop::before, .snap::after, .zoom-level::after, .pick::after {
  content: ""; width: 20px; height: 12px; background: #050505; clip-path: polygon(0 0, 100% 0, 50% 100%);
}
.pdf { font: 700 5px "Open Sans", sans-serif; fill: #fff; }
.zoom-level { position: relative; width: 336px; height: 92px; background: #fff; border: 4px solid #dbe6ee; border-top-color: #9bb0ba; }
.zoom-level select { appearance: none; width: 100%; height: 100%; padding-left: 16px; }
.zoom-level::after, .pick::after { position: absolute; right: 16px; top: 36px; width: 28px; height: 16px; pointer-events: none; }
.snap { width: 264px; height: 92px; justify-content: flex-start; padding-left: 16px; gap: 36px; }

.workspace { flex: 1; min-height: 0; display: flex; border-bottom: 4px solid #d1dcdd; }
.toolbox { width: 120px; flex: none; display: flex; flex-direction: column; gap: 20px; padding: 12px 0 0 16px; border-right: 4px solid #d1dcdd; }
.toolbox .tool { padding-right: 8px; }
.fly::after { content: ""; position: absolute; right: 4px; bottom: 4px; width: 20px; height: 20px; background: #050505; clip-path: polygon(100% 0, 100% 100%, 0 100%); }
.rule { width: 88px; height: 4px; margin: 4px 0; flex: none; background: #d1dcdd; }
.a-icon { font: 700 18px "Open Sans", sans-serif; text-anchor: middle; fill: #e8ecf8; stroke: #5c70ae; stroke-width: 1px; }
.oval { width: 92px; height: 72px; }
.oval svg { width: 72px; height: 72px; }
.toolbox .oval { margin: 36px 0 0 -2px; }
.more { color: #a9adbd; width: 48px; height: 40px; padding-bottom: 12px; font-size: 64px; line-height: 40px; }
.toolbox .more { margin: 104px 0 0 18px; padding-bottom: 20px; font-size: 88px; }

.center { flex: 1; min-width: 0; display: flex; flex-direction: column; }
.propbar { height: 164px; flex: none; display: flex; align-items: center; gap: 20px; padding: 16px 12px 12px; border-bottom: 4px solid #d1dcdd; }
.propbar .sep { height: 132px; }
.propbar .oval { margin-left: 24px; }
.pick { position: relative; width: 360px; height: 92px; border: 4px solid #56686e; border-radius: 8px; background: linear-gradient(#f0f3f4, #e3e8e9 48%, #d5dedf 50%, #c3cfd1); box-shadow: inset 0 0 0 4px #f5f8f9; }
.page-size { width: 632px; }
.pick select { appearance: none; width: 100%; height: 100%; padding-left: 12px; }
.pair { display: grid; grid-template-columns: 68px 380px; grid-auto-rows: 64px; height: 132px; }
.pair label svg, .nudge label svg { width: 64px; height: 64px; }
.dims label { padding: 8px 0 0 4px; }
.field { display: flex; align-items: center; gap: 4px; height: 68px; padding-right: 4px; background: #fff; border: 4px solid #dfe9ef; border-top-color: #9bb0ba; }
.pair .field:last-child { border-top-color: #dfe9ef; }
.field input { flex: 1; min-width: 0; height: 60px; padding-left: 4px; }
.spin { width: 36px; height: 52px; border: 4px solid #9bb0ba; background: linear-gradient(#f2f5f6, #c8d3d5); box-shadow: inset 0 0 0 4px #fff; }
.spin::before { content: ""; width: 20px; height: 12px; background: #4a70f0; clip-path: polygon(0 0, 100% 0, 50% 100%); }
.spin.up::before { clip-path: polygon(50% 0, 100% 100%, 0 100%); }
.units { display: flex; align-items: center; }
.units label { width: 136px; padding-left: 8px; }
.nudge { display: flex; align-items: center; }
.nudge label { width: 80px; padding-left: 8px; }
.nudge .field { width: 312px; height: 92px; }
.stack { display: flex; flex-direction: column; }
.stack .spin { width: 68px; height: 40px; }

.tabs { height: 80px; flex: none; display: flex; gap: 4px; background: #e4ebed; border-bottom: 4px solid #4fd3fc; }
.tab { width: 304px; justify-content: flex-start; padding-left: 12px; background: #d1dcdd; }
.tab.active { background: #c8edfe; }
.tab.add { width: 76px; padding-left: 24px; }
.box { width: 32px; height: 44px; flex: none; border: 4px solid #a9b8bb; }
.box.faint { border-color: #ccd7d9; }

.editor { flex: 1; min-height: 0; display: grid; grid-template: 76px 1fr 68px / 72px 1fr; padding: 0 4px 4px 0; border-bottom: 4px solid #d1dcdd; }
.corner { padding: 24px 0 0 24px; }
.corner svg { width: 48px; height: 48px; }
.ruler-h { width: 100%; height: 76px; border-bottom: 4px solid #789096; }
.ruler-v { grid-row: 2 / 4; grid-column: 1; width: 72px; height: 100%; }
.ruler-h rect, .ruler-v rect { fill: #789096; }
.ruler-h rect.cursor, .ruler-v rect.cursor { fill: #050505; }
.ruler-h text, .ruler-v text { font: 36px "Open Sans", sans-serif; fill: #7d9198; }
.canvas { position: relative; display: flex; background: #fff; border-left: 4px solid #789096; min-height: 0; }
.page { flex: 1; min-width: 0; height: 100%; }
.vscroll { width: 68px; display: flex; flex-direction: column; }
.arrow { width: 68px; height: 68px; background: linear-gradient(90deg, #e4eaeb, #f1f4f5); border: 4px solid #e8edee; }
.arrow::before { content: ""; width: 28px; height: 16px; background: #151a1c; clip-path: polygon(0 0, 100% 0, 50% 100%); }
.arrow.up, .arrow.down { padding-left: 4px; }
.arrow.up::before { clip-path: polygon(50% 0, 100% 100%, 0 100%); }
.arrow.left::before, .arrow.right::before { width: 16px; height: 32px; clip-path: polygon(0 0, 100% 50%, 0 100%); }
.arrow.left::before { clip-path: polygon(100% 0, 100% 100%, 0 50%); }
.thumb { border: 4px solid #829aa0; border-radius: 4px; gap: 4px; }
.thumb i { background: linear-gradient(90deg, #20282b, #6f858c); }
.vscroll .thumb { width: 64px; height: 248px; margin: 460px 0 0 4px; flex-direction: column; background: linear-gradient(90deg, #f4f7f8, #e6ebee 45%, #d2dee2 50%, #b0bec8 85%, #c6d2d9); }
.vscroll .thumb i { width: 28px; height: 8px; }
.vscroll .down { margin-top: auto; }
.pager { display: flex; background: #fff; border-left: 4px solid #789096; min-width: 0; }
.pager-nav { width: 1876px; flex: none; display: flex; align-items: center; background: #f1f5f6; border-top: 4px solid #8fa3a9; border-right: 4px solid #8fa3a9; padding: 0 12px; }
.p-add svg { width: 40px; height: 48px; }
.p-first svg, .p-last svg { width: 28px; height: 36px; }
.p-prev svg, .p-next svg { width: 20px; height: 36px; }
.p-first { margin-left: 32px; }
.p-prev { margin-left: 48px; }
.p-count { width: 292px; text-align: center; padding-right: 12px; }
.p-last { margin: 0 36px 0 40px; }
.page-tab { position: relative; width: 268px; height: 64px; margin-left: 16px; padding: 0 8px 8px 0; background: #fff; clip-path: polygon(0 0, 240px 0, 100% 32px, 100% 100%, 0 100%); }
.page-tab svg { position: absolute; left: 0; top: 0; width: 268px; height: 68px; }
.grip { width: 44px; height: 12px; flex: none; background: repeating-linear-gradient(90deg, #a9b8bb 0 8px, transparent 8px 16px); }
.grip.tall { width: 8px; height: 40px; background: repeating-linear-gradient(#a9b8bb 0 8px, transparent 8px 16px); }
.hscroll { flex: 1; min-width: 0; display: flex; }
.hscroll .left { padding-right: 8px; }
.hscroll .thumb { width: 580px; height: 64px; margin: 4px 0 0 576px; background: linear-gradient(#f2f5f6, #e2e8eb 45%, #cbd7de 50%, #b4c3cb 85%, #c6d2d9); }
.hscroll .thumb i { width: 8px; height: 28px; background: linear-gradient(#20282b, #6f858c); }
.hscroll .right { margin-left: auto; }
.nav-zoom { width: 68px; height: 68px; padding: 4px 0 0 4px; }
.nav-zoom svg { width: 56px; height: 56px; }

.docpal { height: 72px; flex: none; display: flex; align-items: center; padding-left: 16px; }
.d-play { margin-left: 24px; }
.d-play svg { width: 20px; height: 36px; }
.d-drop { margin: 0 24px 0 28px; }
.d-drop svg, .c-drop svg { width: 48px; height: 48px; }
.docpal .box { width: 28px; height: 40px; }
.swatches { display: flex; flex-direction: column; gap: 4px; width: 72px; padding: 4px; background: #3b494f; }
.swatches.row { flex-direction: row; width: auto; height: 72px; margin-left: 20px; }
.sw { width: 64px; height: 64px; background: #fff; }
.sw svg { width: 64px; height: 64px; }
.sw.selected { box-shadow: 0 0 0 4px #fff; }
.sw.cut { height: 4px; margin-bottom: -4px; }
.docpal .box.end { margin-left: auto; }
.docpal .d-more { margin: 0 36px 0 24px; }

.palette { width: 76px; flex: none; display: flex; flex-direction: column; align-items: center; border-left: 4px solid #d1dcdd; padding-top: 12px; }
.c-play { margin: 16px 0 20px; }
.c-play svg { width: 20px; height: 36px; }
.palette .box { width: 28px; height: 36px; margin: 20px 0 16px; }
.palette .swatches + .box { margin: 16px 0; }
.palette .more { margin-top: 4px; }

.status { height: 132px; flex: none; display: flex; align-items: center; }
.coords { width: 400px; flex: none; padding-left: 20px; font-size: 44px; }
.st-play { width: 56px; height: 56px; border: 4px solid #050505; }
.st-play svg { width: 20px; height: 36px; }
.st-fill { display: flex; align-items: center; flex: none; margin-left: auto; width: 928px; }
.ic { width: 64px; height: 64px; }
.st-fill .ic { margin-right: 52px; }
.st-fill .ic + .ic { margin-right: 20px; }
.chip { width: 72px; height: 72px; margin-right: 12px; border: 4px solid #9aabb0; background: #fff; }
.chip svg { width: 64px; height: 64px; }
.chip.black { background: #0a0804; margin-left: 16px; }
.st-outline { display: flex; align-items: center; flex: none; width: 888px; height: 88px; padding-left: 24px; border-left: 4px solid #d1dcdd; font-size: 45px; }

.taskbar { height: 160px; flex: none; display: flex; gap: 8px; border-top: 4px solid #223c5c; box-shadow: inset 0 4px #bfe2f6; background: linear-gradient(90deg, #6f9dc1 0, #6f9dc1 240px, #9ad0f0 380px, #9ad0f0 2840px, #6f9dc1 3000px); }
.start { width: 228px; padding-right: 12px; }
.start svg { width: 148px; height: 148px; }
.task { width: 240px; }
.task svg { width: 128px; height: 128px; }
.task.open { border: 4px solid #33506f; border-top-color: #cfe6f4; border-radius: 6px; background: linear-gradient(160deg, #eef7fc, #b8dcf2 45%, #a4d4f2 55%, #a9d7f3); box-shadow: inset 0 0 0 4px #cfe8f6; }
.task-stack { display: flex; width: 240px; border-right: 4px solid #4f7798; background: #cfe7f5; border-radius: 6px; }
.task.open.active { width: 220px; padding-right: 4px; background: linear-gradient(160deg, #fff, #cce6f5 50%, #bfe0f4 60%, #dff3f9); box-shadow: inset 0 0 0 4px #f2fafd; }
.tray { margin-left: auto; display: flex; align-items: center; gap: 32px; color: #fff; }
.lang { width: 68px; margin-right: 4px; font-size: 40px; padding-bottom: 20px; color: #f3f8e8; }
.tr svg { width: 64px; height: 64px; }
.clock { width: 324px; margin: 0 -32px 0 -8px; display: flex; flex-direction: column; align-items: center; font-size: 44px; line-height: 68px; }
.desktop { width: 60px; height: 100%; border: 4px solid #8db3cc; box-shadow: inset 4px 0 #24415f; background: linear-gradient(160deg, #7fa3b8 20%, #35587c 30%, #456a90 60%, #6f9abd); }
```
FILE: rulers.js
```js
// Ruler marks every half centimetre; longer ones at 2.5 cm, labelled ones at 5 cm.
const NS = "http://www.w3.org/2000/svg";
const UNIT = 4;
const STEP = 9.45;

function add(parent, name, attrs, text) {
  const node = document.createElementNS(NS, name);
  for (const key in attrs) node.setAttribute(key, attrs[key]);
  if (text) node.textContent = text;
  parent.appendChild(node);
}

function markLength(i) {
  return i % 10 === 0 ? 20 : i % 5 === 0 ? 8 : 4;
}

const h = document.getElementById("ruler-h");
for (let i = 0; i <= 98; i++) {
  const x = Math.round(7 + i * STEP) * UNIT;
  const len = markLength(i);
  add(h, "rect", { x, y: 68 - len, width: 4, height: len });
  if (i % 10 === 0) add(h, "text", { x: x + 4, y: 43, "text-anchor": "middle" }, String(5 + i / 2));
}
add(h, "text", { x: 3536, y: 43 }, "centimeters");
for (const y of [8, 32, 56]) add(h, "rect", { class: "cursor", x: 2448, y, width: 4, height: 12 });

const v = document.getElementById("ruler-v");
for (let i = 0; i <= 36; i++) {
  const y = Math.round(7 + i * STEP) * UNIT;
  const len = markLength(i);
  add(v, "rect", { x: 68 - len, y, width: len, height: 4 });
  if (i % 10 === 0) add(v, "text", { "text-anchor": "middle", transform: `translate(43 ${y - 6}) rotate(-90)` }, String(30 - i / 2));
}
add(v, "text", { transform: "translate(43 1400) rotate(-90)" }, "centimeters");
for (const x of [8, 32, 56]) add(v, "rect", { class: "cursor", x, y: 344, width: 12, height: 4 });
```
